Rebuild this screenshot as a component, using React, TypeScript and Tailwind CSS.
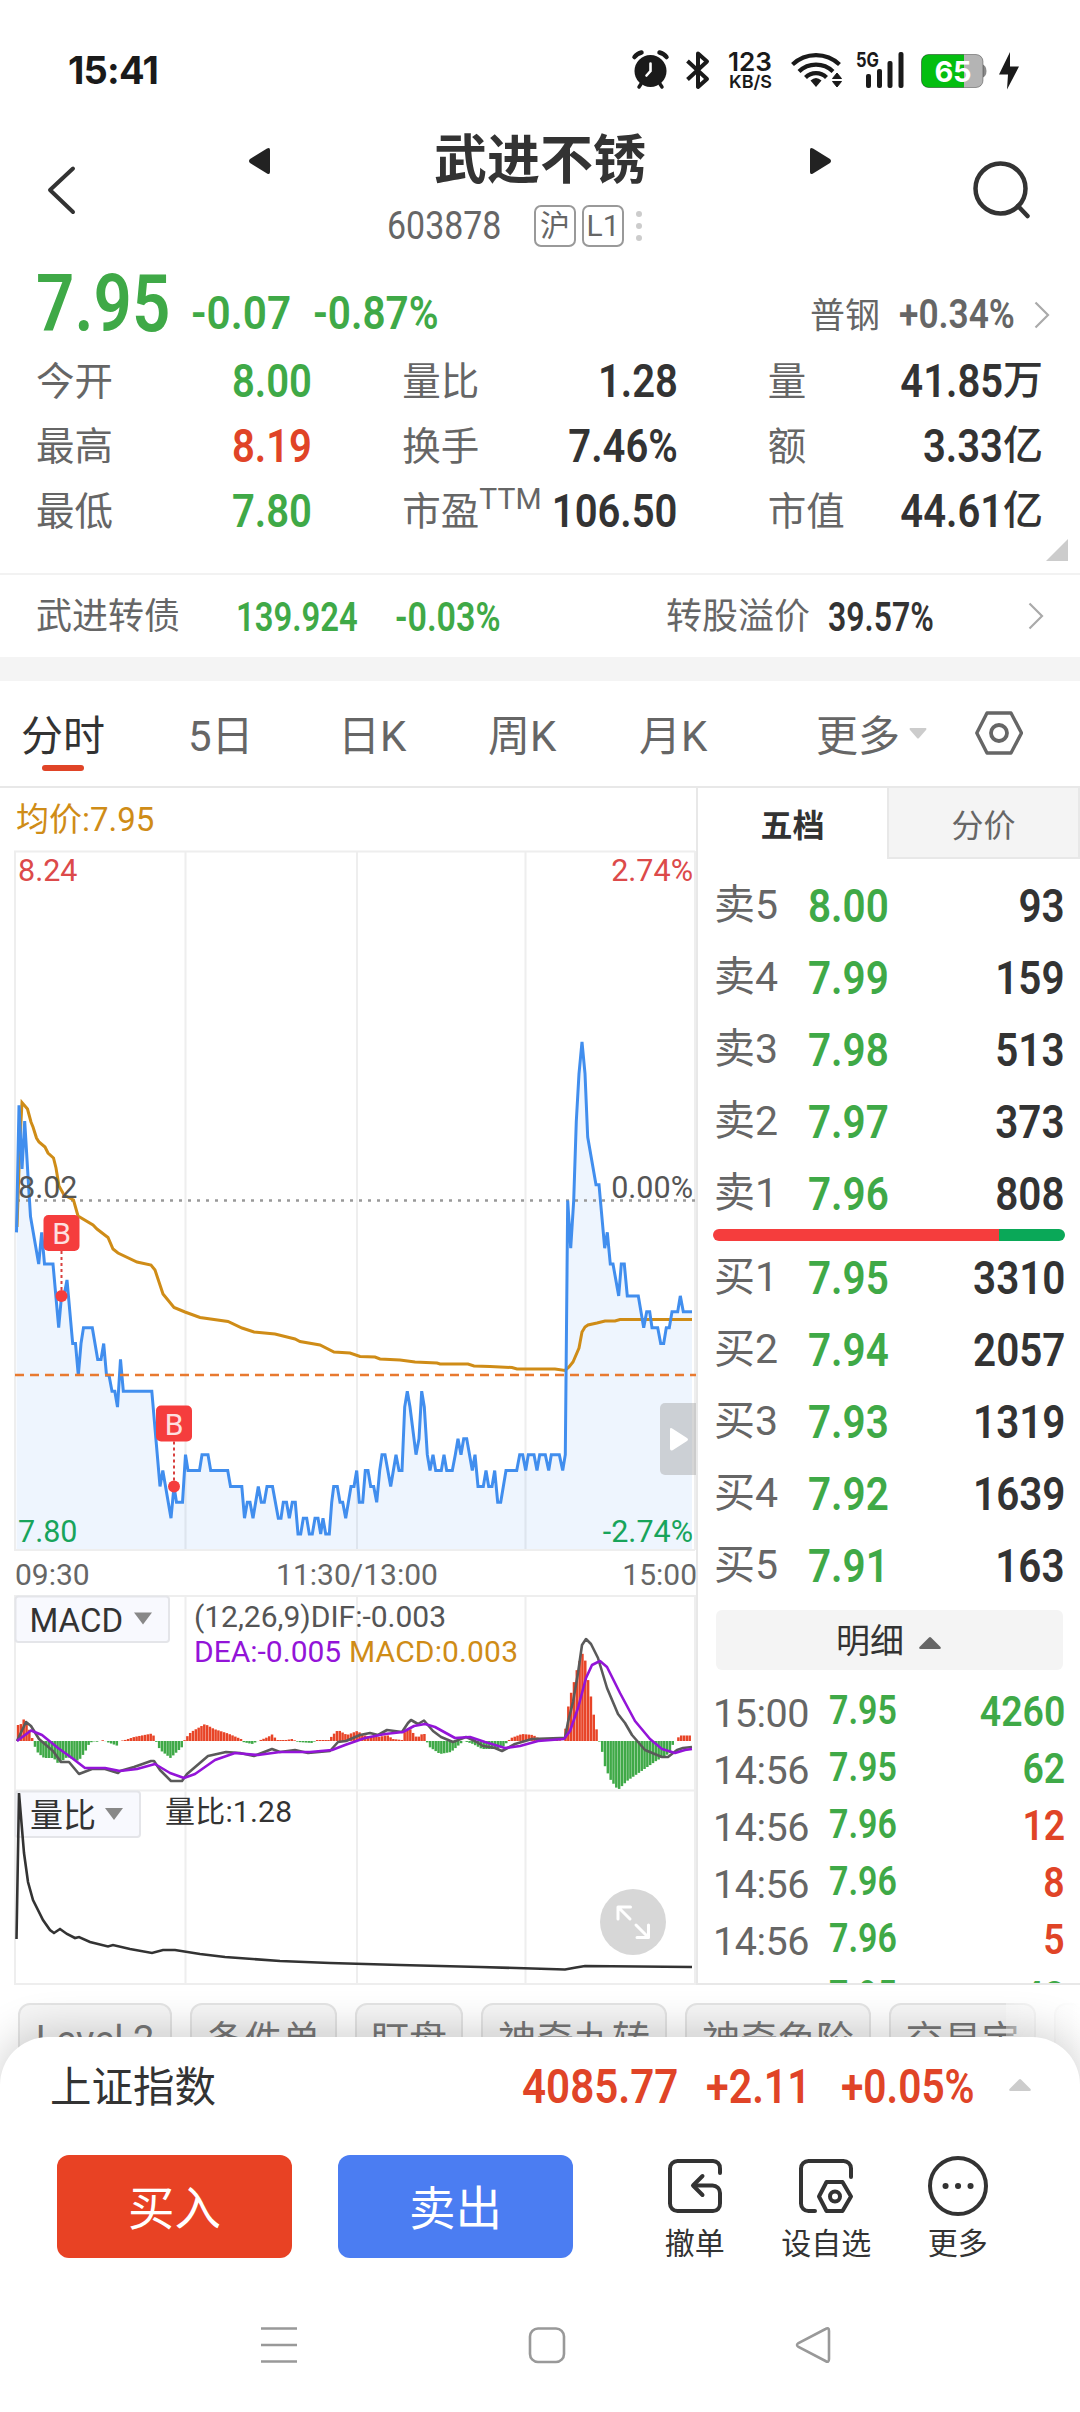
import type { ReactNode } from "react";
import clsx from "clsx";

type Point = [number, number];

const UP = "text-[#e04427]";
const DOWN = "text-[#3fa947]";

const quotes = [
  [
    { label: "今开", value: "8.00", color: DOWN },
    { label: "量比", value: "1.28" },
    { label: "量", value: "41.85", unit: "万" },
  ],
  [
    { label: "最高", value: "8.19", color: UP },
    { label: "换手", value: "7.46%" },
    { label: "额", value: "3.33", unit: "亿" },
  ],
  [
    { label: "最低", value: "7.80", color: DOWN },
    { label: "市盈", sup: "TTM", value: "106.50" },
    { label: "市值", value: "44.61", unit: "亿" },
  ],
];

const asks = [
  ["卖5", "8.00", "93"],
  ["卖4", "7.99", "159"],
  ["卖3", "7.98", "513"],
  ["卖2", "7.97", "373"],
  ["卖1", "7.96", "808"],
];

const bids = [
  ["买1", "7.95", "3310"],
  ["买2", "7.94", "2057"],
  ["买3", "7.93", "1319"],
  ["买4", "7.92", "1639"],
  ["买5", "7.91", "163"],
];

const trades = [
  { time: "15:00", price: "7.95", volume: "4260", color: DOWN },
  { time: "14:56", price: "7.95", volume: "62", color: DOWN },
  { time: "14:56", price: "7.96", volume: "12", color: UP },
  { time: "14:56", price: "7.96", volume: "8", color: UP },
  { time: "14:56", price: "7.96", volume: "5", color: UP },
  { time: "14:56", price: "7.95", volume: "48", color: DOWN },
];

const tabs = [
  { label: "分时", width: "w-[167px]", active: true },
  { label: "5日", width: "w-[150px]" },
  { label: "日K", width: "w-[150px]" },
  { label: "周K", width: "w-[151px]" },
  { label: "月K", width: "w-[177px]" },
];

const chips = [
  { label: "Level 2", width: "w-[154px]" },
  { label: "条件单", width: "w-[147px]" },
  { label: "盯盘", width: "w-[108px]" },
  { label: "神奇九转", width: "w-[186px]" },
  { label: "神奇色阶", width: "w-[186px]" },
  { label: "交易宝", width: "w-[147px]" },
  { label: "", width: "w-[147px]" },
];

// [x, price in cents]
const price: Point[] = [
  [16.5, 800], [19, 808], [22, 804], [24.7, 807], [29, 802.5], [30.5, 801], [38.7, 798], [41.7, 800],
  [44.5, 798], [53, 798], [58.7, 794], [61.5, 796], [64, 796], [67, 797], [72.7, 793], [75.5, 793],
  [78.3, 791], [81, 793], [83.5, 794], [92.3, 794], [97.7, 792], [101, 792], [103.7, 793], [106.5, 791],
  [109, 791], [112, 790], [114.8, 790], [117.5, 789], [120.5, 792], [123.3, 790], [151.8, 790], [160, 784],
  [162.8, 785], [171, 782], [174, 784], [176.5, 783], [182.5, 783], [185.5, 786], [188, 785], [199.5, 785],
  [202, 786], [208, 786], [210.7, 785], [227.7, 785], [230.5, 784], [241.8, 784], [244.5, 782], [247.3, 783],
  [250, 783], [253, 782], [258.3, 784], [261.3, 783], [264.3, 783], [267, 784], [272.5, 784], [278.3, 782],
  [281, 782], [283.3, 783], [286.5, 783], [289.3, 782], [292.3, 783], [295.3, 783], [298, 781], [300.7, 781],
  [303.3, 782], [306.7, 782], [309.3, 781], [312.3, 781], [315, 782], [318, 782], [320.7, 781], [323, 782],
  [325.7, 781], [329.3, 781], [331.7, 783], [333.7, 784], [337.3, 784], [340, 783], [342.7, 783], [345.7, 782],
  [351, 784], [354, 784], [356.7, 785], [359.3, 783], [362.7, 783], [365.3, 785], [368, 785], [370.7, 784],
  [373.7, 784], [376.7, 783], [379.7, 785], [382, 786], [385, 786], [390.7, 784], [396, 786], [399, 785],
  [402, 785], [404.7, 789], [407.3, 790], [410, 789], [416, 786], [419, 787], [421.7, 790], [424.3, 789],
  [427.3, 786], [430, 785], [433, 786], [435.7, 785], [441.3, 785], [444, 786], [446.7, 785], [452.3, 785],
  [455.3, 786], [458, 787], [461, 786], [463.7, 787], [466.7, 787], [472.3, 785], [475, 786], [478, 784],
  [483.3, 784], [486, 785], [488.7, 784], [492, 784], [494.7, 785], [497.7, 783], [500.7, 783], [506, 785],
  [516.7, 785], [519.7, 786], [522.7, 786], [525.7, 785], [528.3, 786], [534, 786], [537, 785], [539.7, 786],
  [545.3, 786], [548.7, 785], [551.3, 786], [559.3, 786], [562.7, 785], [565.3, 786], [567.7, 802], [570.7, 799],
  [573.7, 802], [576.3, 807], [579, 810], [582, 812], [585, 810], [587.7, 806], [596, 803], [599, 803],
  [604.7, 799], [607.3, 800], [610.3, 798], [613, 798], [618.7, 796], [621.3, 798], [624.3, 798], [627.3, 796],
  [638.3, 796], [643.7, 794], [646.7, 795], [649.7, 795], [652, 794], [657.7, 794], [660.7, 793], [663.7, 793],
  [666.3, 794], [669.3, 794], [672, 795], [677.7, 795], [680.3, 796], [683.3, 795], [692, 795],
];

const average: Point[] = [
  [17, 1227], [20, 1140], [22, 1102.5], [27.5, 1109], [31, 1122], [33, 1127], [36.5, 1138], [39, 1142],
  [45, 1147], [48, 1153], [53.5, 1158], [56, 1168], [59, 1186], [64, 1195], [73.5, 1200], [78, 1216],
  [93, 1225], [97, 1229], [108, 1237.5], [113, 1249], [118, 1253], [137, 1262], [151, 1265], [155, 1270],
  [163, 1294], [174, 1307.5], [185, 1312], [200, 1317.5], [228, 1321.5], [242, 1328], [254, 1332], [275, 1334],
  [295, 1339], [300, 1341.5], [320, 1345], [334, 1352], [350, 1353], [360, 1356.5], [375, 1357], [380, 1359],
  [400, 1360], [415, 1362], [437, 1363], [440, 1364], [468, 1364], [474, 1366], [490, 1366.5], [512, 1367.5],
  [517, 1369], [555, 1369], [565, 1370.5], [569, 1367], [573, 1362], [579, 1348], [582, 1332], [585, 1327],
  [588, 1325], [597, 1323], [605, 1321], [615, 1321], [620, 1319.5], [692, 1319.5],
];

// [x, bar height], negative below the zero line
const macd: Point[] = [
  [17, 6], [18, 16], [21, 17], [24.5, 23], [27.7, 14], [30, 10], [33, 0], [35, -6], [38, -12], [44, -17],
  [53.5, -17], [58.5, -23], [67, -16], [78.5, -20], [85, -11], [89, -3], [93, 0], [96, -1], [103.5, 1],
  [107, -1], [118, -5], [119.6, 0], [125, 1], [134, 4], [152, 7.5], [154.5, 4], [156.7, -2], [160, -9],
  [170.5, -17], [182, -6], [184, 0], [185.7, 3], [191, 9], [205, 17], [214, 12], [228, 7.5], [241, 2],
  [243, -1], [252, -3], [258, 0], [268, 4], [272, 6.5], [277, 1], [286, 1], [292, 2], [298, -1], [312, -2],
  [317, 1], [329, 1], [332.6, 6], [338, 11], [347, 6], [357, 10], [366, 5], [379, 4], [387, 6], [393, 2],
  [402, 1], [405, 10], [410, 12], [417, 3], [422, 7], [425, 7], [426.5, 0], [429.5, -6], [440, -13],
  [451, -11], [460, -3], [464, 0], [473, -3], [482, -8], [495, -8], [504, -5], [508, 0], [511, 3], [522, 7],
  [533, 6], [538, 3], [554, 2], [563, 0], [566, 15], [568, 33], [570.5, 46], [573.5, 57], [576.5, 70],
  [582, 88], [585, 82], [587.5, 64], [590.5, 47], [593, 30], [596, 14], [598.6, 2], [602, -10], [604.5, -24],
  [610, -38], [618, -49], [627, -40], [643, -29], [656, -20], [670, -12], [673, -3], [675.5, 0], [678.6, 4],
  [681, 5.5], [693, 5.5],
];

const dif: Point[] = [
  [17, 1741], [26, 1722], [31, 1726], [39, 1739], [53, 1751], [61, 1762], [69, 1762], [79, 1774], [92, 1769],
  [105, 1769], [118, 1773], [120, 1771], [134, 1767], [151, 1761], [154, 1761], [160, 1770], [171, 1781],
  [182, 1781], [187, 1774], [208, 1756], [226, 1752], [240, 1753], [254, 1756], [272, 1749], [280, 1752],
  [295, 1750], [308, 1753], [330, 1751], [338, 1742], [346, 1741], [360, 1735], [370, 1733], [378, 1735],
  [387, 1730], [402, 1732], [408, 1723], [411, 1720], [418, 1724], [424, 1720.5], [433, 1731], [441, 1737],
  [453, 1742], [466, 1737], [475, 1741], [483, 1746], [495, 1748], [502, 1751], [515, 1744], [532, 1739],
  [560, 1738], [565, 1738], [568, 1722], [573, 1702], [578, 1673], [582, 1645], [586, 1639], [591, 1644],
  [598, 1658], [607, 1688], [618, 1714], [625, 1723], [632, 1735], [645, 1750], [662, 1757], [668, 1757],
  [677, 1750], [683, 1748], [692, 1747],
];

const dea: Point[] = [
  [17, 1741], [31, 1730.5], [42, 1735], [58, 1748], [72, 1758], [85, 1768], [105, 1768], [120, 1771],
  [137, 1769], [155, 1764], [170, 1773], [184, 1778], [195, 1774], [215, 1760], [235, 1753], [258, 1755],
  [280, 1752], [310, 1752], [332, 1750], [345, 1745], [365, 1738], [385, 1734], [403, 1732], [414, 1726],
  [425, 1724], [435, 1727], [455, 1738], [470, 1737], [485, 1742], [505, 1748], [520, 1746], [538, 1741],
  [564, 1739], [570, 1731], [578, 1708], [586, 1678], [592, 1665], [600, 1661], [607, 1667], [620, 1693],
  [635, 1721], [650, 1739], [662, 1749], [675, 1753], [685, 1750], [692, 1749],
];

const volumeRatio: Point[] = [
  [16.5, 1939], [19, 1793], [24, 1853], [28, 1882], [33, 1900], [43, 1920], [50, 1930], [54, 1933], [60, 1929],
  [67, 1934], [75, 1938], [79, 1937], [90, 1942], [108, 1946.5], [113, 1945], [130, 1949], [152, 1953],
  [163, 1950], [175, 1950], [200, 1954], [225, 1957], [280, 1961], [330, 1963], [400, 1965], [480, 1967],
  [565, 1969.5], [576, 1967.5], [585, 1966], [692, 1967],
];

const toLine = (points: Point[]) => points.map((p) => p.join(",")).join(" ");

const priceLine = toLine(price.map(([x, cents]) => [x, 1200.6 - (cents - 802) * 15.88]));

function heightAt(x: number) {
  const i = macd.findIndex((p) => p[0] >= x);
  if (i < 1) return macd[0][1];
  const [x0, y0] = macd[i - 1];
  const [x1, y1] = macd[i];
  return y0 + ((y1 - y0) * (x - x0)) / (x1 - x0);
}

const bars = Array.from({ length: 239 }, (_, i) => {
  const x = 18 + i * 2.822;
  return { x, h: heightAt(x) };
});

// Price figures; callers squeeze them with scale-x
function Num({ children, className }: { children: ReactNode; className?: string }) {
  return (
    <span className={clsx("inline-block whitespace-nowrap font-semibold", className)}>
      {children}
    </span>
  );
}

function Chevron({ className }: { className?: string }) {
  return (
    <svg viewBox="0 0 16 28" className={clsx("w-4 h-7", className)} fill="none" stroke="#aaa" strokeWidth="2.2">
      <path d="M1.5 1.5 14 14 1.5 26.5" />
    </svg>
  );
}

function StatusBar() {
  return (
    <div className="h-[112px] pt-7 pl-[68px] flex items-center text-[#1a1a1a]">
      <span className="w-[562px] font-[Inter] font-bold text-[38px] tracking-[-0.8px]">15:41</span>
      <svg viewBox="630 48 400 44" className="w-[400px] h-11 shrink-0 overflow-visible" fill="#1a1a1a">
        <circle cx="650.5" cy="71" r="16" />
        <g fill="none" stroke="#1a1a1a" strokeWidth="4.5" strokeLinecap="round">
          <path d="M634.5 57a12 12 0 0 1 7-4.5M659.5 52.5a12 12 0 0 1 7 4.5" />
          <path d="m641 84-2 3M660 84l2 3" strokeWidth="3.5" />
        </g>
        <path d="M650.5 63.5V71l-4 4.5" fill="none" stroke="#fff" strokeWidth="2.6" strokeLinecap="round" />
        <path
          d="m687.5 61 19.5 18-9 8V53.500l9 8-19.500 18"
          fill="none"
          stroke="#1a1a1a"
          strokeWidth="4"
          strokeLinejoin="round"
        />
        <text x="728" y="71" textLength="44" lengthAdjust="spacingAndGlyphs" className="font-[Inter] font-semibold text-[26px]">123</text>
        <text x="729" y="87.5" textLength="43" lengthAdjust="spacingAndGlyphs" className="font-[Inter] font-semibold text-[17.5px]">KB/S</text>
        <g fill="none" stroke="#1a1a1a" strokeWidth="4.2">
          <path d="M792.5 64.5a34 34 0 0 1 47 0" />
          <path d="M799 71.5a24.5 24.5 0 0 1 34 0" />
          <path d="M805.5 77.5a15 15 0 0 1 21 0" />
        </g>
        <path d="M810.5 80.5q5.5-5 11 0l-5.5 6.5z" />
        <path d="m832.5 78.5 4.5-5.5 4.5 5.5zM832.5 81.5h9l-4.5 5.5z" stroke="#1a1a1a" strokeLinejoin="round" />
        <text x="856" y="66.5" textLength="23" lengthAdjust="spacingAndGlyphs" className="font-[Inter] font-bold text-[20px]">5G</text>
        <rect x="866" y="74" width="5" height="14" rx="2" />
        <rect x="877" y="69" width="5" height="19" rx="2" />
        <rect x="887.5" y="61" width="5" height="27" rx="2" />
        <rect x="898.5" y="52" width="5" height="36" rx="2" />
        <path d="M981 64q5.5 1 5.5 7t-5.5 7z" fill="#8a8a8a" />
        <rect x="921.5" y="54.5" width="61.5" height="33" rx="7" fill="#b4b4b4" />
        <path d="M928.5 54.5H964v33h-35.5a7 7 0 0 1-7-7v-19a7 7 0 0 1 7-7z" fill="#04be10" />
        <rect x="921.5" y="54.5" width="61.5" height="33" rx="7" fill="none" stroke="#00000055" />
        <text x="934.5" y="82" textLength="37" className="fill-white font-[Inter] font-bold text-[29px]">65</text>
        <path d="m1010 52-11 22.5h9l-1 15 12-23h-9z" />
      </svg>
    </div>
  );
}

function Header() {
  return (
    <div className="h-[150px] flex">
      <svg viewBox="0 112 200 150" className="w-[200px] h-[150px]" fill="none" stroke="#333" strokeWidth="4">
        <path d="M73 168.5 50 190 73 212" strokeLinecap="round" strokeLinejoin="round" />
      </svg>
      <div className="w-[680px] flex flex-col items-center">
        <div className="w-[584px] h-[97px] flex items-center justify-between">
          <svg viewBox="0 0 22 26" className="w-[22px] h-[26px]" fill="#222">
            <path d="M22 2v22q0 3-3 1.500L2 15q-2-2 0-4L19 .5Q22-1 22 2z" />
          </svg>
          <h1 className="pt-[2px] font-bold text-[53px] leading-[97px] text-[#333]">武进不锈</h1>
          <svg viewBox="0 0 22 26" className="w-[22px] h-[26px] rotate-180" fill="#222">
            <path d="M22 2v22q0 3-3 1.500L2 15q-2-2 0-4L19 .5Q22-1 22 2z" />
          </svg>
        </div>
        <div className="w-[584px] pl-[139px] h-[34px] flex items-center text-[#666] leading-none">
          <span className="w-[147px] text-[39px]">
            <span className="inline-block origin-left scale-x-[0.87]">603878</span>
          </span>
          <span className="w-[42px] h-[42px] mr-[6px] border-2 border-[#999] rounded-[7px] text-[30px] flex items-center justify-center">沪</span>
          <span className="w-[42px] h-[42px] border-2 border-[#999] rounded-[7px] text-[30px] flex items-center justify-center">L1</span>
          <span className="ml-[12px] flex flex-col gap-[6px]">
            <i className="w-[6px] h-[6px] rounded-full bg-[#ccc]" />
            <i className="w-[6px] h-[6px] rounded-full bg-[#ccc]" />
            <i className="w-[6px] h-[6px] rounded-full bg-[#ccc]" />
          </span>
        </div>
      </div>
      <svg viewBox="880 112 200 150" className="w-[200px] h-[150px]" fill="none" stroke="#333" strokeWidth="4.5">
        <circle cx="1000.5" cy="188.5" r="25" />
        <path d="m1018 206 9.5 10" strokeLinecap="round" />
      </svg>
    </div>
  );
}

function Summary() {
  return (
    <div className="h-[311px] pt-[2px]">
      <div className="h-[83px] flex items-start pl-[36px] leading-none">
        <div className={clsx("w-[155px] text-[80px]", DOWN)}>
          <Num className="origin-left scale-x-[0.84] font-bold">7.95</Num>
        </div>
        <div className={clsx("w-[122px] pt-[26px] text-[46px]", DOWN)}>
          <Num className="origin-left scale-x-[0.92] font-medium">-0.07</Num>
        </div>
        <div className={clsx("w-[497px] pt-[26px] text-[46px]", DOWN)}>
          <Num className="origin-left scale-x-[0.88] font-medium">-0.87%</Num>
        </div>
        <div className="w-[89px] pt-[35px] text-[35px] text-[#666]">普钢</div>
        <div className="w-[135px] pt-[30px] text-[41px] text-[#666]">
          <Num className="origin-left scale-x-[0.86] font-medium">+0.34%</Num>
        </div>
        <Chevron className="mt-[37px]" />
      </div>
      <div className="pl-9 pr-[37px] pt-[1px]">
        {quotes.map((row, i) => (
          <div key={i} className="h-[65px] flex items-center leading-none">
            {row.map((q, j) => (
              <div
                key={q.label}
                className={clsx(
                  "flex items-center justify-between",
                  j === 0 ? "w-[277px] mr-[90px]" : "w-[276px]",
                  j === 1 && "mr-[90px]",
                )}
              >
                <span className="pt-1 text-[38.5px] text-[#666] flex">
                  {q.label}
                  {q.sup && <sup className="text-[30px] -top-[9px] leading-none">{q.sup}</sup>}
                </span>
                <span className={clsx("flex justify-end items-center text-[46px]", q.color ?? "text-[#333]")}>
                  <Num className="origin-right scale-x-[0.87] -ml-8">{q.value}</Num>
                  {q.unit && <span className="text-[40px] font-medium">{q.unit}</span>}
                </span>
              </div>
            ))}
          </div>
        ))}
      </div>
      <svg viewBox="0 0 22 22" className="w-[22px] h-[22px] ml-[1046px] mt-[-4px]">
        <path d="M22 0v22H0z" fill="#ccc" />
      </svg>
    </div>
  );
}

function BondRow() {
  return (
    <div className="h-[84px] pt-[2px] border-t-2 border-[#f2f2f2] flex items-center pl-9 leading-none text-[41px]">
      <span className="w-[200px] text-[36px] text-[#666]">武进转债</span>
      <span className={clsx("w-[159px]", DOWN)}>
        <Num className="origin-left scale-x-[0.8]">139.924</Num>
      </span>
      <span className={clsx("w-[271px]", DOWN)}>
        <Num className="origin-left scale-x-[0.83]">-0.03%</Num>
      </span>
      <span className="w-[162px] text-[36px] text-[#666]">转股溢价</span>
      <span className="w-[200px] text-[#333]">
        <Num className="origin-left scale-x-[0.78]">39.57%</Num>
      </span>
      <Chevron className="-mt-[2px]" />
    </div>
  );
}

function Tabs() {
  return (
    <div className="h-[107px] border-b-2 border-[#e8e8e8] flex pl-[21px] pt-[32px] text-[42px] leading-[48px] text-[#666]">
      {tabs.map((tab) => (
        <div key={tab.label} className={tab.width}>
          <div className={clsx("w-fit", tab.active && "text-[#333]")}>
            {tab.label}
            {tab.active && <div className="w-[42px] h-[6px] mt-[4px] mx-auto rounded-full bg-[#e04427]" />}
          </div>
        </div>
      ))}
      <span className="w-[93px]">更多</span>
      <svg viewBox="0 0 18 11" className="w-[18px] h-[11px] mt-[15px]">
        <path d="M1 0h16q1 1 0 2l-7 8q-1 1-2 0L1 2Q0 1 1 0z" fill="#ccc" />
      </svg>
      <svg viewBox="0 0 48 44" className="w-12 h-11 ml-[48px] -mt-[2px]" fill="none" stroke="#666" strokeWidth="3.4">
        <path d="M12 2h24l10.500 20L36 42H12L1.800 22z" strokeLinejoin="round" />
        <circle cx="24" cy="22" r="8" strokeWidth="3.8" />
      </svg>
    </div>
  );
}

function TradeMarker({ x, y }: { x: number; y: number }) {
  return (
    <g>
      <path d={`M${x} ${y + 36}v40`} stroke="#d8403f" strokeWidth="2" strokeDasharray="3 3" />
      <circle cx={x} cy={y + 81} r="6" fill="#f53d3d" />
      <rect x={x - 18} y={y} width="36" height="36" rx="5" fill="#f53d3d" />
      <text x={x} y={y + 29} textAnchor="middle" fill="#fde0e0" className="text-[30px]">B</text>
    </g>
  );
}

function Charts() {
  return (
    <svg viewBox="0 788 696 1197" className="w-[696px] h-[1197px] text-[30px]" fill="none">
      <g stroke="#eeeeee" strokeWidth="2">
        <path d="M14 851.5h681M14 1550h681M14 1596h681M14 1790.5h681M14 1984h681" />
        <path d="M15 851v699M185.5 851v699M357 851v699M525.5 851v699M695 851v699" />
        <path d="M15 1595v390M185.5 1595v390M357 1595v390M525.5 1595v390M695 1595v390" />
      </g>

      <polygon points={`16.5,1549 ${priceLine} 692,1549`} fill="#3f8eef" fillOpacity="0.09" />
      <path d="M17 1200.6h678" stroke="#999" strokeWidth="2.5" strokeDasharray="3 6" />
      <polyline points={toLine(average)} stroke="#cf8c17" strokeWidth="3" />
      <polyline points={priceLine} stroke="#418eee" strokeWidth="3" />
      <path d="M15 1375h681" stroke="#e87a30" strokeWidth="2.4" strokeDasharray="9 6" />

      <text x="16" y="831" fill="#cf8c17" className="text-[33px]">均价:7.95</text>
      <g className="text-[30.5px]">
        <text x="18" y="881" fill="#dc4a4a">8.24</text>
        <text x="693" y="881" textAnchor="end" fill="#dc4a4a">2.74%</text>
        <text x="18" y="1198" fill="#555">8.02</text>
        <text x="693" y="1198" textAnchor="end" fill="#555">0.00%</text>
        <text x="18" y="1542" fill="#18a45b">7.80</text>
        <text x="693" y="1542" textAnchor="end" fill="#18a45b">-2.74%</text>
      </g>
      <g fill="#666">
        <text x="15" y="1584.5">09:30</text>
        <text x="357" y="1584.5" textAnchor="middle">11:30/13:00</text>
        <text x="697" y="1584.5" textAnchor="end">15:00</text>
      </g>

      <TradeMarker x={61.5} y={1215} />
      <TradeMarker x={174} y={1405.5} />

      <path d="M696 1403h-31a5 5 0 0 0-5 5v62a5 5 0 0 0 5 5h31z" fill="#999" fillOpacity="0.4" />
      <path d="M670 1429.5v19q0 3 3 1.5l14-9q2-1.5 0-3l-14-9q-3-2-3 .5z" fill="#fff" />

      {bars.map(({ x, h }) => (
        <rect
          key={x}
          x={x - 1.2}
          y={h > 0 ? 1741 - h : 1741}
          width="2.5"
          height={Math.abs(h)}
          fill={h > 0 ? "#e84427" : "#3fa947"}
        />
      ))}
      <polyline points={toLine(dif)} stroke="#5a5a5a" strokeWidth="2.6" strokeLinejoin="round" />
      <polyline points={toLine(dea)} stroke="#9314d8" strokeWidth="2.6" strokeLinejoin="round" />

      <rect x="15.5" y="1596.5" width="153.5" height="45.5" rx="3" fill="#f8f9fe" stroke="#e4e5e9" strokeWidth="2" />
      <text x="29.5" y="1632" fill="#333" className="text-[33px]">MACD</text>
      <path d="M134 1612.5h18l-9 12z" fill="#888" />
      <text x="194" y="1627" fill="#555" textLength="252">(12,26,9)DIF:-0.003</text>
      <text x="194" y="1662" fill="#9314d8">DEA:-0.005</text>
      <text x="349" y="1662" fill="#cf8c17" textLength="169">MACD:0.003</text>

      <rect x="15.5" y="1791.5" width="124.5" height="45.5" rx="3" fill="#f8f9fe" stroke="#e4e5e9" strokeWidth="2" />
      <text x="30" y="1827" fill="#333" className="text-[33px]">量比</text>
      <path d="M105 1808h18l-9 12z" fill="#888" />
      <text x="165" y="1822" fill="#333" textLength="127">量比:1.28</text>
      <polyline points={toLine(volumeRatio)} stroke="#333" strokeWidth="2.6" />

      <circle cx="633" cy="1922" r="33" fill="#d7d7d7" />
      <g stroke="#fff" strokeWidth="3" strokeLinecap="round" strokeLinejoin="round">
        <path d="M630 1919l-12-12M618 1919v-12h12.5" />
        <path d="M636 1925l12 12M648.5 1925v12.5H637" />
      </g>
    </svg>
  );
}

function DepthRows({ rows }: { rows: string[][] }) {
  return (
    <>
      {rows.map(([label, bid, volume]) => (
        <div key={label} className="h-[72px] flex items-center leading-none text-[47px]">
          <span className="w-[94px] text-[41px] text-[#666]">{label}</span>
          <span className={DOWN}>
            <Num className="origin-left scale-x-[0.86]">{bid}</Num>
          </span>
          <span className="ml-auto text-[#333]">
            <Num className="origin-right scale-x-[0.86]">{volume}</Num>
          </span>
        </div>
      ))}
    </>
  );
}

function OrderBook() {
  return (
    <div className="flex-1 h-[1197px] overflow-hidden border-b-2 border-[#e8e8e8]">
      <div className="h-[71px] flex text-[32px] leading-none">
        <div className="w-[189px] flex items-center justify-center pt-1 font-bold text-[#333]">五档</div>
        <div className="flex-1 flex items-center justify-center pt-[6px] bg-[#f4f4f4] border-2 border-t-0 border-[#e8e8e8] text-[#666]">
          分价
        </div>
      </div>
      <div className="pl-[16px] pr-[15px]">
        <div className="pt-[10px]">
          <DepthRows rows={asks} />
        </div>
        <div className="h-3 -ml-px flex rounded-full overflow-hidden">
          <div className="w-[286px] bg-[#f53d3d]" />
          <div className="flex-1 bg-[#0aa858]" />
        </div>
        <DepthRows rows={bids} />
        <div className="h-[60px] mx-[2px] mt-[9px] mb-[14px] pt-[2px] pr-[2px] rounded-md bg-[#f4f4f4] flex items-center justify-center gap-[15px] text-[34px] text-[#333]">
          <span>明细</span>
          <svg viewBox="0 0 22 12" className="w-[22px] h-3 mt-[4px]">
            <path d="M10 .5q1-1 2 0l9.500 9.500q1 2-1 2h-19q-2 0-1-2z" fill="#666" />
          </svg>
        </div>
        {trades.map((trade, i) => (
          <div key={i} className="h-[57px] flex items-center leading-none">
            <span className="w-[116px] pt-[2px] -ml-px text-[39.5px] tracking-[-0.5px] text-[#666]">{trade.time}</span>
            <span className={clsx("text-[40px] -mt-[4px]", DOWN)}>
              <Num className="origin-left scale-x-[0.85]">{trade.price}</Num>
            </span>
            <span className={clsx("ml-auto text-[43px] -mt-[2px]", trade.color)}>
              <Num className="origin-right scale-x-[0.87]">{trade.volume}</Num>
            </span>
          </div>
        ))}
      </div>
    </div>
  );
}

function Chips() {
  return (
    <div className="relative w-[1080px] flex gap-[18px] pl-[18px] pt-[18px] overflow-hidden">
      {chips.map((chip) => (
        <div
          key={chip.label}
          className={clsx(
            "h-20 shrink-0 rounded-xl border-2 border-[#e4e4e4] bg-[#f6f6f6] text-[38px] leading-[70px] text-center whitespace-nowrap text-[#777]",
            chip.width,
          )}
        >
          {chip.label}
        </div>
      ))}
      <div className="absolute right-0 top-0 w-[74px] h-full bg-gradient-to-r from-white/40 to-white" />
    </div>
  );
}

function BottomSheet() {
  return (
    <div className="relative -mt-[53px] h-[375px] bg-white rounded-t-[48px] shadow-[0_-4px_44px_rgba(0,0,0,0.2)]">
      <div className="h-[98px] pl-[50px] flex items-center leading-none">
        <span className="w-[472px] pt-[3px] text-[41.5px] text-[#333]">上证指数</span>
        <div className={clsx("flex text-[49px]", UP)}>
          <span className="w-[184px]">
            <Num className="origin-left scale-x-[0.86] font-medium">4085.77</Num>
          </span>
          <span className="w-[135px]">
            <Num className="origin-left scale-x-[0.84] font-medium">+2.11</Num>
          </span>
          <span className="w-[168px]">
            <Num className="origin-left scale-x-[0.83] font-medium">+0.05%</Num>
          </span>
        </div>
        <svg viewBox="0 0 22 12" className="w-[22px] h-3 -mt-[3px]">
          <path d="M10 .5q1-1 2 0l9.500 9.500q1 2-1 2h-19q-2 0-1-2z" fill="#ccc" />
        </svg>
      </div>
      <div className="pt-5 pl-[57px] flex text-white text-[46.5px]">
        <button className="w-[235px] h-[103px] pt-[7px] mr-[46px] rounded-xl bg-[#e84224]">买入</button>
        <button className="w-[235px] h-[103px] pt-[7px] mr-[56px] rounded-xl bg-[#4b7df2]">卖出</button>
        <Action label="撤单">
          <path d="M52 14V9.5a7 7 0 0 0-7-7.5H9.5A7.5 7.5 0 0 0 2 9.5v35a7.5 7.5 0 0 0 7.5 7.5H45a7 7 0 0 0 7-7.5V34a7.5 7.5 0 0 0-7.5-7.5H26" />
          <path d="M34.5 17 25 26.5 34.5 36" />
        </Action>
        <Action label="设自选">
          <path d="M52 18V9.5A7.5 7.5 0 0 0 44.5 2h-35A7.5 7.5 0 0 0 2 9.5v35A7.5 7.5 0 0 0 9.5 52H16" />
          <path d="M27.5 23h16L52 37.5 43.5 52h-16L20 37.5z" />
          <circle cx="36" cy="37.5" r="5" />
        </Action>
        <Action label="更多">
          <circle cx="27" cy="27" r="28" />
          <path d="M14.5 27h.1M27 27h.1M39.5 27h.1" strokeWidth="6" />
        </Action>
      </div>
      <div className="mt-[65px] h-[42px] pl-[255px]">
        <svg viewBox="255 2325 580 42" className="w-[580px] h-[42px]" fill="none" stroke="#999" strokeWidth="2.6">
          <path d="M261 2329.5h36M261 2346h36M261 2362.5h36" />
          <rect x="530" y="2329.5" width="34" height="33.5" rx="8" />
          <path d="M829 2332v28q0 4-3.5 2l-27-14q-3-2 0-4l27-14q3.5-2 3.500 2z" />
        </svg>
      </div>
    </div>
  );
}

function Action({ label, children }: { label: string; children: ReactNode }) {
  return (
    <div className="w-[131.5px] flex flex-col items-center text-[#333]">
      <svg
        viewBox="0 0 54 54"
        className="w-[54px] h-[54px] mt-1 overflow-visible"
        fill="none"
        stroke="#333"
        strokeWidth="4"
        strokeLinecap="round"
        strokeLinejoin="round"
      >
        {children}
      </svg>
      <span className="mt-[16px] text-[30px] leading-[30px]">{label}</span>
    </div>
  );
}

export default function App() {
  return (
    <div className="w-[1080px] h-[2412px] overflow-hidden bg-white font-[Roboto,'Noto_Sans_CJK_SC',sans-serif]">
      <main className="h-[2090px] overflow-hidden">
        <StatusBar />
        <Header />
        <Summary />
        <BondRow />
        <div className="h-6 bg-[#f4f4f4]" />
        <Tabs />
        <div className="flex">
          <div className="w-[698px] border-r-2 border-[#e8e8e8]">
            <Charts />
          </div>
          <OrderBook />
        </div>
        <Chips />
      </main>
      <BottomSheet />
    </div>
  );
}
